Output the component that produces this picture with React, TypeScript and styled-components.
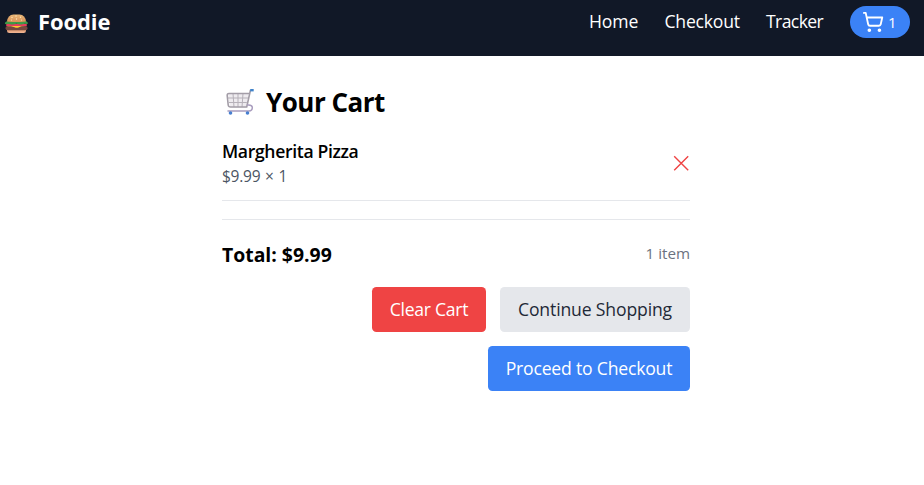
import React from 'react';
import styled, { createGlobalStyle } from 'styled-components';
import { ShoppingCart } from 'lucide-react';

const GlobalStyle = createGlobalStyle`
  *, *::before, *::after { box-sizing: border-box; }
  body { margin: 0; background: #fff; color: #000; font-family: "Segoe UI", "Open Sans", sans-serif; }
  h1, h2, p { margin: 0; }
  button { border: 0; font-family: inherit; cursor: pointer; }
`;

const Label = styled.span<{ $size: number; $track?: number; $weight?: number }>`
  font-size: ${(p) => p.$size}px;
  letter-spacing: ${(p) => p.$track ?? 0}px;
  font-weight: ${(p) => p.$weight ?? 400};
  white-space: nowrap;
`;

const Header = styled.header`
  display: flex;
  justify-content: space-between;
  align-items: center;
  height: 56px;
  padding: 0 14px 12px 4px;
  background: #111827;
  color: #fff;
`;

const Brand = styled.div`
  display: flex;
  align-items: center;
  gap: 9px;
  line-height: 30px;
  padding-bottom: 2px;
  svg { display: block; margin-top: 5px; }
`;

const Nav = styled.nav`
  display: flex;
  align-items: center;
  line-height: 32px;
`;

const NavLink = styled.a<{ $width: number }>`
  width: ${(p) => p.$width}px;
  padding-bottom: 2px;
  color: #fff;
  text-decoration: none;
`;

const CartPill = styled.a`
  display: flex;
  align-items: center;
  gap: 4px;
  width: 60px;
  height: 32px;
  padding-left: 12px;
  border-radius: 16px;
  background: #3b82f6;
  svg circle { fill: #fff; }
`;

const Main = styled.main`
  width: 468px;
  margin: 0 0 0 222px;
  padding-top: 28px;
`;

const Title = styled.h1`
  display: flex;
  align-items: center;
  gap: 8px;
  height: 37px;
  padding-bottom: 1px;
  line-height: 35px;
  svg { display: block; }
`;

const CartItem = styled.div`
  display: flex;
  justify-content: space-between;
  align-items: center;
  height: 80px;
  border-bottom: 1px solid #e5e7eb;
  padding-top: 5px;
`;

const ItemInfo = styled.div`
  padding-bottom: 2px;
`;

const ItemName = styled.h2`
  height: 26px;
  line-height: 26px;
  font-size: 18px;
`;

const ItemPrice = styled.p`
  height: 23px;
  line-height: 24px;
  color: #4b5563;
  word-spacing: 1px;
`;

const RemoveButton = styled.button`
  display: block;
  padding: 0;
  background: transparent;
  svg { display: block; }
`;

const Summary = styled.div`
  display: flex;
  justify-content: space-between;
  height: 68px;
  margin-top: 18px;
  padding-top: 22px;
  border-top: 1px solid #e5e7eb;
  line-height: 25px;
`;

const ItemCount = styled.div`
  color: #6b7280;
  line-height: 23px;
`;

const Actions = styled.div`
  display: flex;
  flex-wrap: wrap;
  justify-content: flex-end;
  gap: 14px;
`;

const tones = {
  danger: { background: '#ef4444', color: '#fff' },
  neutral: { background: '#e5e7eb', color: '#1f2937' },
  primary: { background: '#3b82f6', color: '#fff' },
};

const Button = styled.button<{ $tone: keyof typeof tones; $width: number }>`
  width: ${(p) => p.$width}px;
  height: 45px;
  padding: 0;
  border-radius: 4.5px;
  line-height: 45px;
  background: ${(p) => tones[p.$tone].background};
  color: ${(p) => tones[p.$tone].color};
`;

const Burger = () => (
  <svg width="25" height="22" viewBox="0 0 25 22">
    <defs>
      <linearGradient id="bun" x1="0" y1="0" x2="0" y2="1">
        <stop offset="0" stopColor="#e9b777" />
        <stop offset="1" stopColor="#d9935a" />
      </linearGradient>
      <linearGradient id="base" x1="0" y1="0" x2="0" y2="1">
        <stop offset="0" stopColor="#d68c62" />
        <stop offset="1" stopColor="#f2b795" />
      </linearGradient>
    </defs>
    <path d="M3 15.5h19v2.2q0 2.3-2.3 2.3H5.3Q3 20 3 17.7z" fill="url(#base)" />
    <rect x="1.5" y="13" width="22" height="4.2" rx="2" fill="#74483f" />
    <path d="M3 11.3h19l-1 1.8q-4 0-6 1.2-2 1.1-4.5 0L7 13.2H3.5z" fill="#fdc72f" />
    <rect x="2" y="11" width="21" height="2" rx="1" fill="#e83b5c" />
    <path d="M1.2 9.5q2-2 5-1.2h13q3-.7 4.5 1.2.7 1.7-1 1.6-2-.6-4 .1-2 .7-4 0-2.5-.8-4.5 0-2 .6-4 0-2-.6-4 0-2 0-1-1.7z" fill="#3f9b46" />
    <path d="M3 8.4Q3.8 2 9.5 1.5h6Q21.2 2 22 8.4q-9.5 1.2-19 0z" fill="url(#bun)" />
    <g fill="#ffe7b8">
      <circle cx="8" cy="4.5" r=".7" /><circle cx="12" cy="3" r=".7" />
      <circle cx="12.5" cy="6" r=".7" /><circle cx="16.5" cy="4.3" r=".7" />
      <circle cx="7.5" cy="7" r=".6" /><circle cx="17.5" cy="7" r=".6" />
    </g>
  </svg>
);

const Trolley = () => (
  <svg width="36" height="36" viewBox="0 0 36 36" fill="none">
    <path d="M6 9.5h20.5l-2.7 14.2L8 23z" fill="#eeebef" />
    <path d="M6 14h20M6.8 18.5h18M11 9.5l1 13.5M16 9.5V23M21 9.5L20 23" stroke="#b6b1b9" strokeWidth="1" />
    <path d="M28.5 6L24.7 23H8.5Q6.5 23 6.2 21L5.2 11.5Q5 9.5 7 9.5H27" stroke="#a39da7" strokeWidth="1.6" strokeLinejoin="round" />
    <path d="M25.5 21q4.200-.5 4.800 2.200.2 3.800-3.500 3.800H6" stroke="#a99dbe" strokeWidth="1.500" strokeLinecap="round" />
    <path d="M28.2 6.200h3.500" stroke="#3f83ca" strokeWidth="2.400" />
    <circle cx="8.500" cy="29" r="1.800" fill="#477fd0" />
    <circle cx="25.500" cy="29" r="1.800" fill="#477fd0" />
  </svg>
);

export default function App() {
  return (
    <>
      <GlobalStyle />
      <Header>
        <Brand>
          <Burger />
          <Label $size={22} $weight={700} $track={-0.1}>Foodie</Label>
        </Brand>
        <Nav>
          <NavLink $width={75.5} href="#home"><Label $size={17.6} $track={-0.15}>Home</Label></NavLink>
          <NavLink $width={101.5} href="#checkout"><Label $size={17.6} $track={-0.22}>Checkout</Label></NavLink>
          <NavLink $width={84} href="#tracker"><Label $size={17.6} $track={-0.6}>Tracker</Label></NavLink>
          <CartPill>
            <ShoppingCart size={22} color="#fff" strokeWidth={2} />
            <Label $size={15}>1</Label>
          </CartPill>
        </Nav>
      </Header>
      <Main>
        <Title>
          <Trolley />
          <Label $size={26} $weight={700} $track={-0.5}>Your Cart</Label>
        </Title>
        <CartItem>
          <ItemInfo>
            <ItemName><Label $size={17.6} $weight={600} $track={-0.35}>Margherita Pizza</Label></ItemName>
            <ItemPrice><Label $size={15.5} $track={-0.25}>$9.99 × 1</Label></ItemPrice>
          </ItemInfo>
          <RemoveButton aria-label="Remove Margherita Pizza">
            <svg width="17" height="17" viewBox="0 0 17 17" stroke="#ef4444" strokeWidth="1.4">
              <path d="M1.2 1.2l14 14M15.2 1.2l-14 14" />
            </svg>
          </RemoveButton>
        </CartItem>
        <Summary>
          <Label $size={19.4} $weight={700}>Total: $9.99</Label>
          <ItemCount><Label $size={15.2}>1 item</Label></ItemCount>
        </Summary>
        <Actions>
          <Button $tone="danger" $width={114}><Label $size={17.6} $track={-0.27}>Clear Cart</Label></Button>
          <Button $tone="neutral" $width={190}><Label $size={17.6} $track={-0.15}>Continue Shopping</Label></Button>
          <Button $tone="primary" $width={202}><Label $size={17.6} $track={-0.2}>Proceed to Checkout</Label></Button>
        </Actions>
      </Main>
    </>
  );
}
